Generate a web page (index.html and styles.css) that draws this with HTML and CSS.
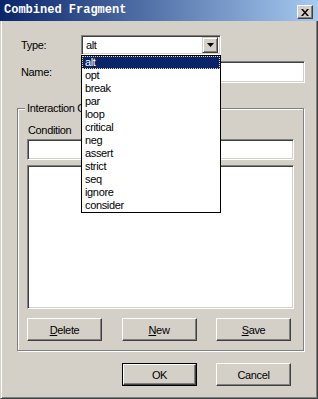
FILE: index.html
```html
<!DOCTYPE html>
<html>
<head>
<meta charset="utf-8">
<link rel="stylesheet" href="styles.css">
</head>
<body>
<div class="window">
  <div class="titlebar">
    <span class="title">Combined Fragment</span>
    <span class="close"><svg width="8" height="7" viewBox="0 0 8 7"><path d="M0 0h2l2 2.5L6 0h2L5 3.5 8 7H6L4 4.5 2 7H0l3-3.5z" fill="#000"/></svg></span>
  </div>
  <div class="content">
    <div class="row row-type">
      <span class="lbl">Type:</span>
      <div class="combo-wrap">
        <div class="combo">
          <span class="combo-text">alt</span>
          <span class="combo-btn"><svg width="7" height="4" viewBox="0 0 7 4"><path d="M0 0h7L3.5 4z" fill="#000"/></svg></span>
        </div>
        <ul class="list">
          <li class="sel">alt</li>
          <li>opt</li>
          <li>break</li>
          <li>par</li>
          <li>loop</li>
          <li>critical</li>
          <li>neg</li>
          <li>assert</li>
          <li>strict</li>
          <li>seq</li>
          <li>ignore</li>
          <li>consider</li>
        </ul>
      </div>
    </div>
    <div class="row row-name">
      <span class="lbl">Name:</span>
      <div class="field name-field"></div>
    </div>
    <div class="group">
      <div class="group-title">Interaction Operands</div>
      <div class="cond-lbl">Condition</div>
      <div class="field cond-field"></div>
      <div class="field text-area"></div>
      <div class="btn-row">
        <div class="btn"><span class="u">D</span>elete</div>
        <div class="btn"><span class="u">N</span>ew</div>
        <div class="btn"><span class="u">S</span>ave</div>
      </div>
    </div>
    <div class="footer">
      <div class="btn default"><div class="btn-inner">OK</div></div>
      <div class="btn">Cancel</div>
    </div>
  </div>
</div>
</body>
</html>
```
FILE: styles.css
```css
html, body {
  margin: 0;
  padding: 0;
}
body {
  width: 318px;
  height: 399px;
  background: #d4d0c8;
  font-family: "Liberation Sans", Arial, sans-serif;
  font-size: 11px;
  letter-spacing: -0.35px;
  color: #000;
  overflow: hidden;
}
.window {
  box-sizing: border-box;
  width: 318px;
  height: 399px;
  border-left: 1px solid #d4d0c8;
  border-right: 1px solid #404040;
  border-bottom: 1px solid #404040;
  box-shadow: inset 1px 0 #fff, inset -1px -1px #808080;
}
.titlebar {
  height: 21px;
  margin: 0 -1px 0 -1px;
  background: linear-gradient(to right, #0a246a, #a6caf0);
  display: flex;
  justify-content: space-between;
  align-items: flex-start;
  padding: 0 5px 0 4px;
}
.title {
  font-family: "Liberation Mono", "Courier New", monospace;
  font-weight: bold;
  font-size: 12px;
  letter-spacing: 0;
  color: #fff;
  line-height: 21px;
}
.close {
  margin-top: 5px;
  box-sizing: border-box;
  width: 16px;
  height: 14px;
  background: #d4d0c8;
  border: 1px solid;
  border-color: #fff #404040 #404040 #fff;
  box-shadow: inset -1px -1px #808080;
  display: flex;
  align-items: center;
  justify-content: center;
}
.close svg { display: block; margin-left: -1px; }
.content {
  padding-top: 14px;
}
.row {
  display: flex;
  align-items: center;
  padding-left: 20px;
}
.lbl {
  width: 60px;
}
.row-type { height: 20px; }
.combo-wrap {
  position: relative;
  width: 140px;
  height: 20px;
}
.combo, .field {
  box-sizing: border-box;
  background: #fff;
  border: 1px solid;
  border-color: #808080 #fff #fff #808080;
  box-shadow: inset 1px 1px #404040, inset -1px -1px #d4d0c8;
}
.combo {
  height: 20px;
  display: flex;
  align-items: center;
  padding: 2px 2px 2px 3px;
}
.combo-text {
  flex: 1;
  padding-left: 1px;
}
.combo-btn {
  box-sizing: border-box;
  width: 16px;
  height: 16px;
  background: #d4d0c8;
  border: 1px solid;
  border-color: #d4d0c8 #404040 #404040 #d4d0c8;
  box-shadow: inset 1px 1px #fff, inset -1px -1px #808080;
  display: flex;
  align-items: center;
  justify-content: center;
}
.combo-btn svg { display: block; }
.list {
  position: absolute;
  top: 20px;
  left: 0;
  z-index: 5;
  box-sizing: border-box;
  width: 140px;
  margin: 0;
  padding: 0;
  list-style: none;
  background: #fff;
  border: 1px solid #000;
}
.list li {
  box-sizing: border-box;
  height: 13px;
  line-height: 13px;
  padding-left: 3px;
}
.list li.sel {
  background: #0a246a;
  color: #fff;
  outline: 1px dotted #f5db95;
  outline-offset: -1px;
}
.row-name {
  margin-top: 6px;
  height: 22px;
}
.name-field {
  width: 224px;
  height: 22px;
}
.group {
  box-sizing: border-box;
  margin: 25px 0 0 16px;
  width: 287px;
  height: 243px;
  border: 1px solid #808080;
  box-shadow: inset 1px 1px #fff, 1px 1px #fff;
  padding: 0 9px 9px 9px;
}
.group-title {
  width: fit-content;
  height: 13px;
  line-height: 13px;
  margin: -7px 0 0 -2px;
  padding: 0 2px;
  background: #d4d0c8;
}
.cond-lbl {
  margin-top: 9px;
  height: 13px;
  line-height: 13px;
  padding-left: 1px;
}
.cond-field {
  margin-top: 2px;
  height: 21px;
}
.text-area {
  margin-top: 5px;
  height: 144px;
}
.btn-row {
  margin-top: 9px;
  display: flex;
  justify-content: space-between;
  padding-right: 3px;
}
.btn {
  box-sizing: border-box;
  width: 75px;
  height: 23px;
  border: 1px solid;
  border-color: #fff #404040 #404040 #fff;
  box-shadow: inset -1px -1px #808080;
  display: flex;
  align-items: center;
  justify-content: center;
  background: #d4d0c8;
}
.u { text-decoration: underline; }
.footer {
  margin: 12px 0 0 121px;
  display: flex;
  gap: 19px;
}
.btn.default {
  border: 1px solid #000;
  box-shadow: none;
  padding: 0;
}
.btn-inner {
  box-sizing: border-box;
  width: 100%;
  height: 100%;
  border: 1px solid;
  border-color: #fff #404040 #404040 #fff;
  box-shadow: inset -1px -1px #808080;
  display: flex;
  align-items: center;
  justify-content: center;
}
```
